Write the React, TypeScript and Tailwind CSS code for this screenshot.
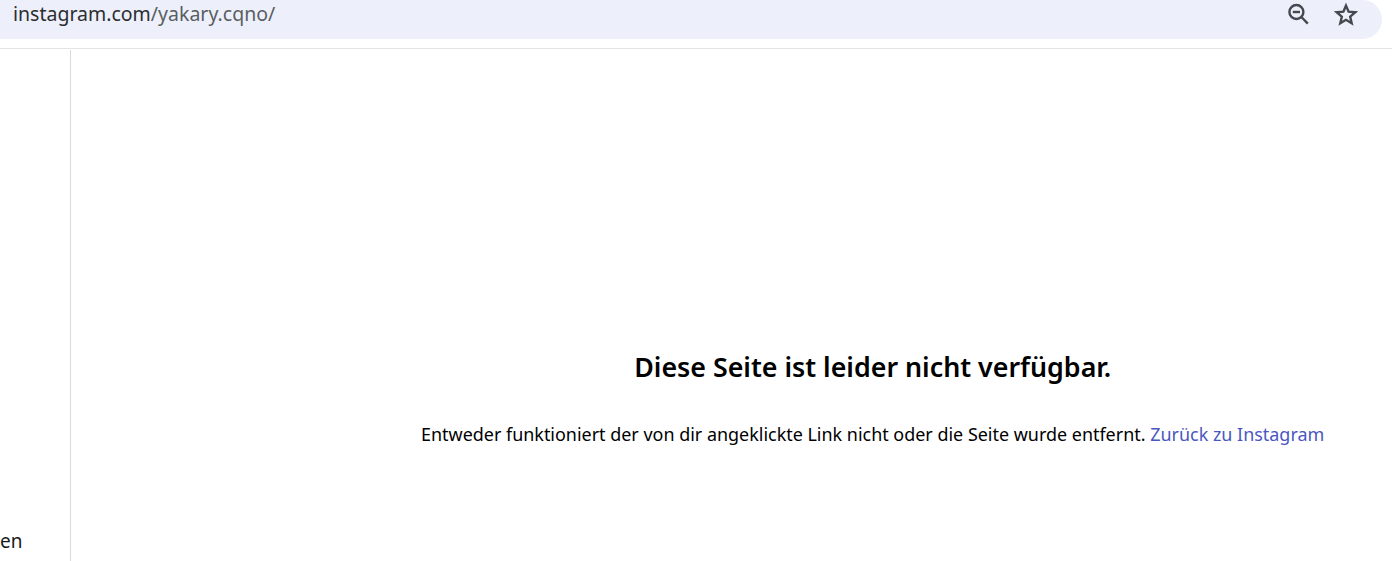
import React from "react";

const ZoomOutIcon = () => (
  <svg width="24" height="24" viewBox="0 0 24 24" fill="none" stroke="#45484c" strokeWidth="2.4">
    <circle cx="10.4" cy="10" r="7" />
    <path d="M15.4 15l6.4 6.6" />
    <path d="M6.8 10h7.2" />
  </svg>
);

const StarIcon = () => (
  <svg width="24" height="24" viewBox="0 0 24 24" fill="none" stroke="#45484c" strokeWidth="2.4" strokeLinejoin="miter">
    <path d="M12 3.6l2.6 6.1 6.6.6-5 4.4 1.5 6.5-5.7-3.4-5.7 3.4 1.5-6.5-5-4.4 6.6-.6z" />
  </svg>
);

export default function App() {
  return (
    <div className="h-[561px] w-[1392px] overflow-hidden bg-white font-['Noto_Sans','Open_Sans',sans-serif] text-black">
      {/* browser bar */}
      <div className="h-[49px] border-b border-[#e4e4e4]">
        <div className="mr-[10px] flex h-[39px] items-start justify-between rounded-r-[20px] bg-[#edf0fb] pl-[13px] pr-[24px]">
          <div className="text-[19.5px] leading-[27px] text-[#5a5d61]">
            <span className="text-[#2b2d30]">instagram.com</span>/yakary.cqno/
          </div>
          <div className="flex items-center gap-[24px] pt-[2px]">
            <ZoomOutIcon />
            <StarIcon />
          </div>
        </div>
      </div>

      <div className="flex h-[512px]">
        {/* sidebar */}
        <div className="mt-[1px] flex w-[71px] shrink-0 flex-col justify-end border-r border-[#dbdbdb] pb-[8px]">
          <div className="text-[19px] leading-[24px] text-[#1a1a1a]">en</div>
        </div>

        {/* error message */}
        <main className="flex flex-1 flex-col items-center pl-[350px] pr-[69px] pt-[298px]">
          <h2 className="text-[26.8px] font-semibold leading-[40px]">Diese Seite ist leider nicht verfügbar.</h2>
          <p className="mt-[35px] whitespace-nowrap text-[17.95px] leading-[24px]">
            Entweder funktioniert der von dir angeklickte Link nicht oder die Seite wurde entfernt.{" "}
            <a className="text-[#4a57c0]">Zurück zu Instagram</a>
          </p>
        </main>
      </div>
    </div>
  );
}
